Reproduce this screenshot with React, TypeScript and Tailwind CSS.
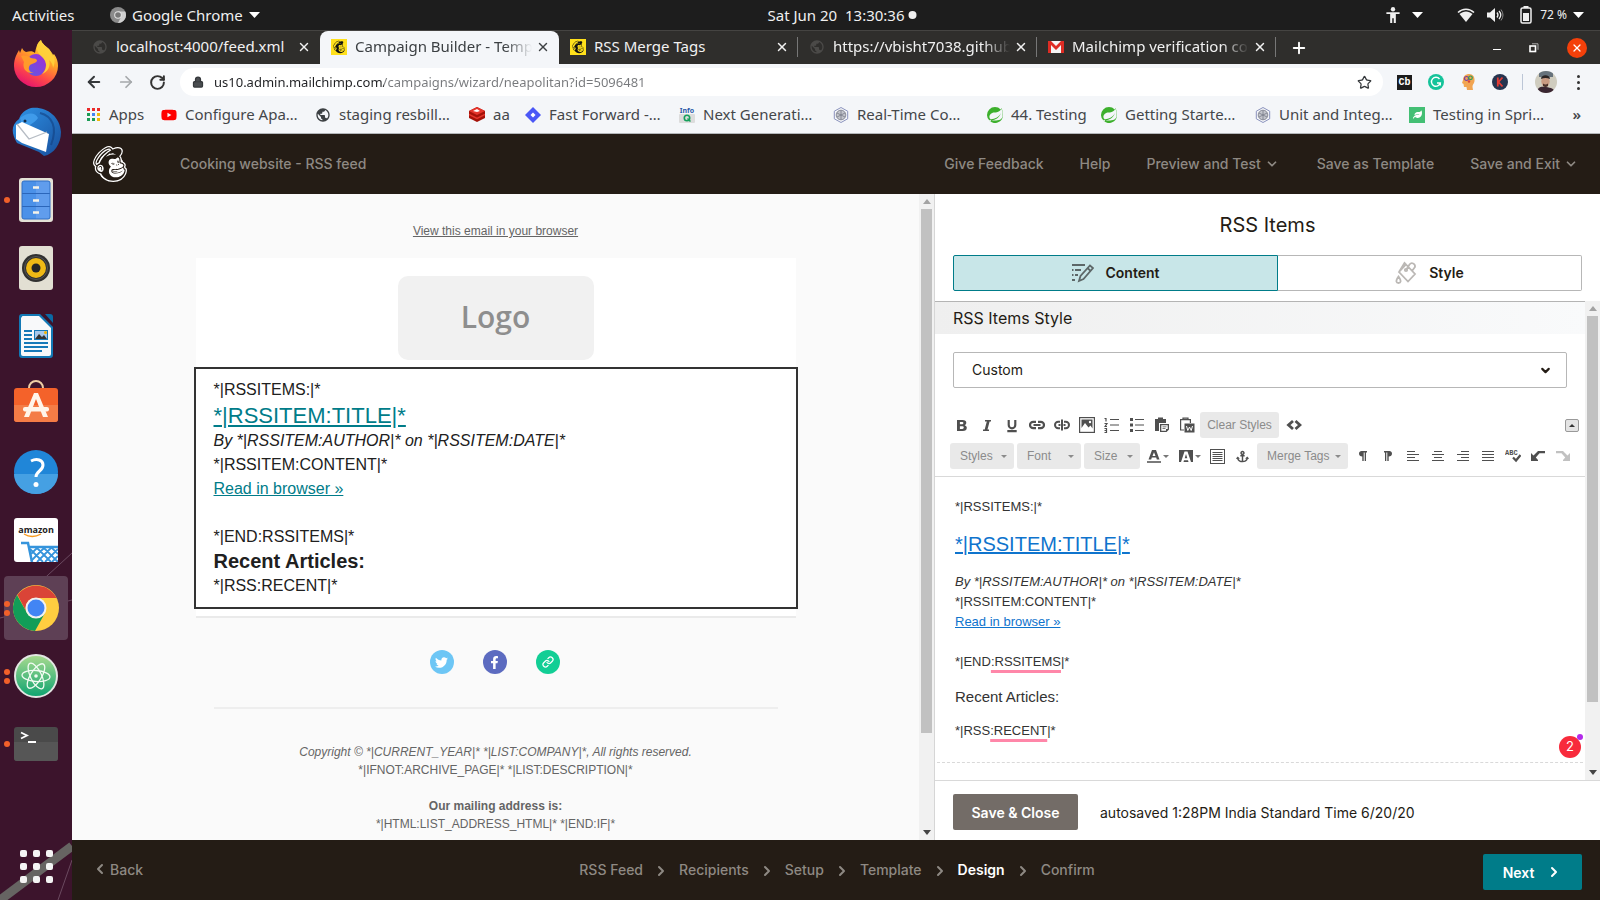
import React from 'react';
import { FaMailchimp, FaTwitter, FaFacebookF, FaYoutube, FaAnchor, FaLeaf } from 'react-icons/fa';
import { SiSpring } from 'react-icons/si';
import { MdPublic } from 'react-icons/md';
import { Link, Lock, Star, RotateCw, ArrowLeft, ArrowRight, Plus, X, ChevronDown, ChevronLeft, ChevronRight } from 'lucide-react';

const UI = "font-['Noto_Sans',sans-serif]";
const GRAPHIK = "font-['Inter',sans-serif]";
const ARIAL = "font-['Liberation_Sans',Arial,sans-serif]";

function Caret({ className = 'h-[6px] w-[11px] text-white' }: { className?: string }) {
  return (
    <svg viewBox="0 0 10 6" preserveAspectRatio="none" className={className} fill="currentColor">
      <path d="M0 0h10L5 6z" />
    </svg>
  );
}

/* ---------- GNOME top bar ---------- */

function TopBar() {
  return (
    <header className={`${UI} relative flex h-[30px] shrink-0 items-center justify-between bg-[#1d1d1d] pr-4 pl-3 text-[15px] text-[#f0f0f0]`}>
      <div className="flex items-center">
        <button className="w-[98px] text-left">Activities</button>
        <button className="flex items-center">
          <svg viewBox="0 0 16 16" className="mr-1.5 h-4 w-4">
            <circle cx="8" cy="8" r="8" fill="#8b8b8b" />
            <path d="M8 4.5h7.2A8 8 0 0 1 8 16l3-6z" fill="#d0d0d0" />
            <circle cx="8" cy="8" r="3.8" fill="#e4e4e4" />
            <circle cx="8" cy="8" r="2.8" fill="#777" />
          </svg>
          Google Chrome
          <Caret className="ml-1.5 h-[6px] w-[11px] text-white" />
        </button>
      </div>
      <button className="absolute left-1/2 flex -translate-x-1/2 items-center pl-[84px] whitespace-pre">
        Sat Jun 20  13:30:36
        <span className="ml-1 h-2 w-2 rounded-full bg-[#f0f0f0]" />
      </button>
      <div className="flex items-center">
        <svg viewBox="0 0 14 18" className="h-[17px] w-[14px]" fill="#f0f0f0">
          <circle cx="7" cy="2.4" r="2.3" />
          <path d="M0 5.5h14v2H10V17H7.8v-5H6.2v5H4V7.500H0z" />
        </svg>
        <Caret className="mr-[34px] ml-3 h-[6px] w-[11px] text-white" />
        <svg viewBox="0 0 18 15" className="mr-3 h-[15px] w-[18px]" fill="none">
          <path d="M1 4.500C5.500 0 12.500 0 17 4.500" stroke="#f0f0f0" strokeWidth="1.500" />
          <path d="M2.500 6C6.500 2.600 11.500 2.600 15.500 6L9 14z" fill="#f0f0f0" />
        </svg>
        <svg viewBox="0 0 17 16" className="mr-4 h-4 w-[17px]" fill="none" stroke="#f0f0f0">
          <path d="M0 5.500h3L8 1v14L3 10.500H0z" fill="#f0f0f0" stroke="none" />
          <path d="M10 5.500q2 2.500 0 5M12 4q3.500 4 0 8" strokeWidth="1.300" />
          <path d="M14 2.500q4 5.500 0 11" stroke="#888" />
        </svg>
        <svg viewBox="0 0 12 18" className="mr-2 h-[18px] w-3">
          <rect x="3.500" y="0" width="5" height="2" fill="#f0f0f0" />
          <rect x="1" y="2" width="10" height="15" rx="1.500" fill="none" stroke="#f0f0f0" strokeWidth="1.500" />
          <rect x="3" y="7" width="6" height="8" fill="#f0f0f0" />
        </svg>
        <span className="text-[12px]">72 %</span>
        <Caret className="ml-1.5 h-[6px] w-[11px] text-white" />
      </div>
    </header>
  );
}

/* ---------- Dock ---------- */

const dockIcons: { name: string; dots: number; active?: boolean; icon: React.ReactNode }[] = [
  {
    name: 'Firefox', dots: 0,
    icon: (
      <svg viewBox="0 0 46 48" className="h-[48px] w-[46px]">
        <defs>
          <linearGradient id="ff" x1="0.800" y1="0" x2="0.300" y2="1">
            <stop offset="0" stopColor="#fff04a" /><stop offset=".4" stopColor="#ffa127" /><stop offset=".7" stopColor="#ff4a48" /><stop offset="1" stopColor="#e4126f" />
          </linearGradient>
          <linearGradient id="fp" x1="0" y1="1" x2="1" y2="0"><stop offset="0" stopColor="#5b5ce0" /><stop offset="1" stopColor="#a32bd6" /></linearGradient>
        </defs>
        <path d="M28 0c1 4 5 6 8 9 2 3 3 5 3 7l2-2c3 4 4 8 4 12a22 21 0 0 1-44 0c0-8 3-12 5-16l1 3 2-5c1 2 2 3 4 4 4-1 7-1 9 1 1-5 2-10 6-13z" fill="url(#ff)" />
        <ellipse cx="23" cy="25" rx="10" ry="11" fill="url(#fp)" />
        <path d="M8 16c5-1 7 0 10 2 3 1 6 0 6 3-2 3-7 2-8 6-1 3 2 6 5 6-8 1-12-5-10-11z" fill="#ff9a2a" />
        <path d="M28 0c-6 5-5 12 1 17 6 5 5 13 0 17 6-2 9-8 7-14 3 2 4 6 4 8 4-9 0-14-4-19-3-3-7-5-8-9z" fill="#ffd13b" opacity=".9" />
      </svg>
    ),
  },
  {
    name: 'Thunderbird', dots: 0,
    icon: (
      <svg viewBox="0 0 50 50" className="h-[50px] w-[50px]">
        <defs><linearGradient id="tb" x1="0" y1="0" x2="1" y2="1"><stop offset="0" stopColor="#2f94e8" /><stop offset="1" stopColor="#184f9c" /></linearGradient></defs>
        <path d="M20 1c15-2 29 8 30 24 0 12-7 22-17 24l-5-4-22-9C0 26 0 18 8 12c2-6 6-9 12-11z" fill="url(#tb)" />
        <path d="M9 11c9-7 16-5 18 0-4 6-9 6-14 12z" fill="#3f9bea" />
        <path d="M5 18l6-3 27 12-3 18-24-9-6-4z" fill="#fff" />
        <path d="M6 17l12 15 18-7" fill="none" stroke="#b6bcc4" strokeWidth="1.300" />
        <path d="M29 6c12 3 18 14 11 32" stroke="#123f80" strokeWidth="2" fill="none" opacity=".6" />
        <circle cx="14" cy="14" r="1.500" fill="#102a4a" />
      </svg>
    ),
  },
  {
    name: 'Files', dots: 1,
    icon: (
      <svg viewBox="0 0 34 44" className="h-[44px] w-[34px]">
        <rect width="34" height="44" rx="3" fill="#e4e1d6" />
        <rect x="3" y="3" width="28" height="38" rx="2" fill="#4b91e8" />
        <path d="M17 3h12a2 2 0 0 1 2 2v34a2 2 0 0 1-2 2H17z" fill="#6ea5f0" opacity=".6" />
        <path d="M3 15.500h28M3 28.500h28" stroke="#2b66ba" />
        <path d="M14 9.500h6M14 22.500h6M14 34.500h6" stroke="#f6f3e9" strokeWidth="2.500" />
        <rect x="3" y="3" width="28" height="38" rx="2" fill="none" stroke="#2f6fc4" />
      </svg>
    ),
  },
  {
    name: 'Rhythmbox', dots: 0,
    icon: (
      <svg viewBox="0 0 34 44" className="h-[44px] w-[34px]">
        <rect width="34" height="44" rx="3" fill="#e2dfd3" />
        <circle cx="17" cy="22" r="14" fill="#303030" />
        <circle cx="17" cy="22" r="11.500" fill="none" stroke="#555" />
        <circle cx="17" cy="22" r="10" fill="#efb915" />
        <circle cx="17" cy="22" r="4.500" fill="#262626" />
      </svg>
    ),
  },
  {
    name: 'Writer', dots: 0,
    icon: (
      <svg viewBox="0 0 34 44" className="h-[44px] w-[34px]">
        <path d="M3 0h18l13 13v28a3 3 0 0 1-3 3H3a3 3 0 0 1-3-3V3a3 3 0 0 1 3-3z" fill="#1379b5" />
        <path d="M3.500 2H20l12 12v26a2 2 0 0 1-2 2H4a2 2 0 0 1-2-2V4z" fill="#f8f9fa" />
        <path d="M26 0h5a3 3 0 0 1 3 3v6z" fill="#0a6aa5" />
        <path d="M5 17h8M5 21h8M5 25h8M5 29h24M5 33h24M5 37h18" stroke="#1679b8" strokeWidth="2" />
        <rect x="15.500" y="16.500" width="13" height="9" fill="#a9c8ea" stroke="#1679b8" />
        <path d="M16 25l4-5 3 3 2-2 3 4z" fill="#333" /><circle cx="26.500" cy="18.500" r="1.500" fill="#f4b400" />
      </svg>
    ),
  },
  {
    name: 'Ubuntu Software', dots: 0,
    icon: (
      <svg viewBox="0 0 44 49" className="h-[49px] w-[44px]">
        <path d="M15 10V8a7 7 0 0 1 14 0v2" fill="none" stroke="#efcfa5" strokeWidth="2" />
        <rect y="8" width="44" height="34" rx="3" fill="#f4622a" />
        <path d="M0 25h44v14a3 3 0 0 1-3 3H3a3 3 0 0 1-3-3z" fill="#f47c46" />
        <path d="M20 13h4l10 24h-5l-7-18-7 18h-5z" fill="#fff5ea" /><rect x="9" y="27" width="26" height="4.500" rx="2" fill="#fff5ea" />
      </svg>
    ),
  },
  {
    name: 'Help', dots: 0,
    icon: (
      <svg viewBox="0 0 44 44" className="h-[44px] w-[44px]">
        <circle cx="22" cy="22" r="22" fill="#2086d8" />
        <path d="M0 24h44a22 20 0 0 1-44 0z" fill="#45a0e3" />
        <path d="M17 11c6-3 12-1 12 4 0 6-7 6-7 12" fill="none" stroke="#fff" strokeWidth="3" />
        <circle cx="22" cy="34.500" r="2.500" fill="#fff" />
      </svg>
    ),
  },
  {
    name: 'Amazon', dots: 0,
    icon: (
      <svg viewBox="0 0 44 44" className="h-[44px] w-[44px]">
        <rect width="44" height="44" rx="3" fill="#fff" />
        <text x="22" y="15" textAnchor="middle" fontFamily="Open Sans, sans-serif" fontWeight="700" fontSize="9" fill="#222">amazon</text>
        <path d="M10 16q8 5 17 0" fill="none" stroke="#f79a1f" strokeWidth="1.400" />
        <path d="M7 25h7l4 19M15 29h29" fill="none" stroke="#3594dc" strokeWidth="2.500" />
        <path d="M16 31l13 13M22 29l15 15M29 29l15 15M37 29l7 7M44 31L31 44M37 30L23 44M30 30L17 43M23 30l-6 6M44 38l-6 6" stroke="#3594dc" strokeWidth="1.800" />
      </svg>
    ),
  },
  {
    name: 'Chrome', dots: 2, active: true,
    icon: (
      <svg viewBox="0 0 46 46" className="h-[46px] w-[46px]">
        <circle cx="23" cy="23" r="23" fill="#ffcd40" />
        <path d="M4.500 10A23 23 0 0 1 43.500 13H23a10 10 0 0 0-9 15z" fill="#da4437" />
        <path d="M4 10A23 23 0 0 0 22 46l10-18a10.500 10.500 0 0 1-18 0z" fill="#119d58" />
        <circle cx="23" cy="23" r="10.500" fill="#f1f1f1" /><circle cx="23" cy="23" r="8.500" fill="#4285f4" />
      </svg>
    ),
  },
  {
    name: 'Atom', dots: 2,
    icon: (
      <svg viewBox="0 0 44 44" className="h-[44px] w-[44px]" fill="none">
        <defs><linearGradient id="at" x1="0" y1="0" x2="0" y2="1"><stop offset="0" stopColor="#a9db8f" /><stop offset="1" stopColor="#0da370" /></linearGradient></defs>
        <circle cx="22" cy="22" r="21" fill="url(#at)" stroke="#e3e6e3" strokeWidth="2" />
        <g stroke="#f1fbf2" strokeWidth="1.300">
          <ellipse cx="22" cy="22" rx="14" ry="5.500" transform="rotate(4 22 22)" />
          <ellipse cx="22" cy="22" rx="14" ry="5.500" transform="rotate(64 22 22)" />
          <ellipse cx="22" cy="22" rx="14" ry="5.500" transform="rotate(122 22 22)" />
        </g>
        <circle cx="22" cy="22" r="1.800" fill="#f1fbf2" />
      </svg>
    ),
  },
  {
    name: 'Terminal', dots: 1,
    icon: (
      <svg viewBox="0 0 44 34" className="h-[34px] w-[44px]">
        <rect width="44" height="34" rx="3" fill="#4a4a4a" /><path d="M0 15h44v16a3 3 0 0 1-3 3H3a3 3 0 0 1-3-3z" fill="#565656" />
        <path d="M7 5.500l6 3-6 3M14 15h8" fill="none" stroke="#fff" strokeWidth="1.800" />
      </svg>
    ),
  },
];

function Dock() {
  return (
    <nav className="relative flex w-[72px] shrink-0 flex-col items-center justify-between overflow-hidden bg-[#3c142c] pt-0.5 pb-[17px]">
      <svg viewBox="0 0 72 360" className="absolute bottom-0 left-0 h-[360px] w-[72px]" fill="none">
        <path d="M0 360L72 306" stroke="#666462" strokeWidth="9" />
        <path d="M0 78L72 60M36 46L72 13M58 360L72 320" stroke="#6b4a60" strokeWidth="1" />
      </svg>
      <div className="relative flex flex-col gap-1">
        {dockIcons.map((d) => (
          <button key={d.name} aria-label={d.name} className={`relative flex h-16 w-16 items-center justify-center rounded ${d.active ? 'bg-[#5e4055]' : ''}`}>
            <span className="absolute left-0 flex flex-col gap-[3px]">
              {Array.from({ length: d.dots }, (_, i) => (
                <span key={i} className="h-1.5 w-1.5 rounded-full bg-[#f2602a]" />
              ))}
            </span>
            {d.icon}
          </button>
        ))}
      </div>
      <button aria-label="Show applications" className="relative grid grid-cols-3 gap-[6px]">
        {Array.from({ length: 9 }, (_, i) => (
          <span key={i} className="h-[7px] w-[7px] rounded-[2px] bg-[#f4f4f4]" />
        ))}
      </button>
    </nav>
  );
}

/* ---------- Browser chrome ---------- */

const MonkeyFav = () => (
  <span className="flex h-4 w-4 shrink-0 items-center justify-center bg-[#ffe01b]"><FaMailchimp size={14} color="#111" /></span>
);
const GmailFav = () => (
  <svg viewBox="0 0 16 12" className="h-3 w-4 shrink-0"><rect width="16" height="12" rx="1" fill="#f4f4f4" /><path d="M0 0h3l5 5 5-5h3v12h-3V4L8 9 3 4v8H0z" fill="#dd2c24" /></svg>
);

const tabs = [
  { title: 'localhost:4000/feed.xml', icon: <MdPublic size={16} color="#4b4a48" className="shrink-0" />, sep: false },
  { title: 'Campaign Builder - Templ', icon: <MonkeyFav />, active: true, sep: false },
  { title: 'RSS Merge Tags', icon: <MonkeyFav />, sep: true },
  { title: 'https://vbisht7038.github', icon: <MdPublic size={16} color="#4b4a48" className="shrink-0" />, sep: true },
  { title: 'Mailchimp verification cod', icon: <GmailFav />, sep: true },
];

function TabStrip() {
  return (
    <div className="flex h-[34px] shrink-0 items-stretch border-t border-[#454442] bg-[#2f2e2c] pl-[9px]">
      {tabs.map((t) => (
        <div
          key={t.title}
          className={`relative flex w-[239px] items-center pb-0.5 pl-[11px] ${t.active ? 'rounded-t-lg bg-[#f4f6f9] text-[#3c4043]' : 'text-[#f1f1f1]'}`}
        >
          {t.icon}
          <button className={`ml-2 w-[177px] overflow-hidden text-left whitespace-nowrap ${t.title.length < 24 ? '' : '[mask-image:linear-gradient(to_right,#000_150px,transparent)]'}`}>{t.title}</button>
          <button aria-label={`Close ${t.title}`} className="ml-1"><X size={14} strokeWidth={2.500} /></button>
          {t.sep && <span className="absolute right-0 h-5 w-px bg-[#777]" />}
        </div>
      ))}
      <button aria-label="New tab" className="ml-3.5 text-white"><Plus size={18} strokeWidth={2.500} /></button>
      <div className="ml-auto flex items-center gap-7 pr-[13px] text-white">
        <button aria-label="Minimize" className="mt-1 h-px w-2 bg-white" />
        <button aria-label="Restore">
          <svg viewBox="0 0 10 10" className="h-[10px] w-[10px]" fill="none" stroke="#fff"><rect x="1" y="3" width="5.500" height="5.500" strokeWidth="1.600" /><path d="M3 .8h6v6" stroke="#aaa" /></svg>
        </button>
        <button aria-label="Close window" className="flex h-5 w-5 items-center justify-center rounded-full bg-[#f4400a]"><X size={12} strokeWidth={2.500} /></button>
      </div>
    </div>
  );
}

function AddressBar() {
  return (
    <div className="flex h-9 shrink-0 items-center bg-[#f4f6f9] pr-5 pl-[13px] text-[#35383b]">
      <button aria-label="Back"><ArrowLeft size={18} strokeWidth={2.600} /></button>
      <button aria-label="Forward" className="ml-3.5 text-[#a5a8ab]"><ArrowRight size={18} strokeWidth={2.300} /></button>
      <button aria-label="Reload" className="ml-3.5 text-[#333]"><RotateCw size={17} strokeWidth={2.800} /></button>
      <div className="ml-3.5 flex h-7 flex-1 items-center rounded-full bg-white pr-[11px] pl-3">
        <Lock size={12} fill="#4a4d50" strokeWidth={2.500} />
        <input
          aria-label="Address"
          className="ml-2.5 h-full flex-1 bg-[linear-gradient(to_right,#202124_170px,#77797c_170px)] bg-clip-text text-[13px] text-transparent outline-none"
          defaultValue="us10.admin.mailchimp.com/campaigns/wizard/neapolitan?id=5096481"
        />
        <button aria-label="Bookmark"><Star size={15} strokeWidth={2} /></button>
      </div>
      <div className="ml-3.5 flex items-center gap-4">
        <span className="flex h-[15px] w-[15px] items-center justify-center bg-[#1c1c1c] font-['Liberation_Mono',monospace] text-[10px] font-bold text-white">Cb</span>
        <svg viewBox="0 0 16 16" className="h-4 w-4"><circle cx="8" cy="8" r="8" fill="#15c39a" /><path d="M11.500 5A4.500 4.500 0 1 0 12.300 9H9M12.300 9v2.500" fill="none" stroke="#fff" strokeWidth="1.400" /></svg>
        <svg viewBox="0 0 14 16" className="h-4 w-4"><path d="M2 6c0-4 3-6 6-6 4 0 6 3 5.500 7-.4 3-2 3-2 6l.5 3H6l-.5-3H3l-.5-3L1 9z" fill="#f1a552" /><circle cx="5.500" cy="4.500" r="2" fill="none" stroke="#7b3fa0" strokeWidth="1.200" /><circle cx="9.500" cy="3.800" r="1.800" fill="none" stroke="#2e9e57" strokeWidth="1.200" /><circle cx="8" cy="7.500" r="1.200" fill="#d8433b" /></svg>
        <svg viewBox="0 0 16 16" className="h-4 w-4"><circle cx="8" cy="8" r="8" fill="#26344f" /><path d="M5.800 3.500v9M10.500 3.500l-4 4.500 4 4.500" fill="none" stroke="#e23b34" strokeWidth="1.800" /></svg>
      </div>
      <span className="mr-3 ml-[14px] h-4 w-px bg-[#bcc6d6]" />
      <svg viewBox="0 0 22 22" className="h-[22px] w-[22px]">
        <defs><clipPath id="av"><circle cx="11" cy="11" r="11" /></clipPath></defs>
        <g clipPath="url(#av)"><rect width="22" height="22" fill="#cfccbf" /><path d="M4 0h14v6H4z" fill="#66727c" /><path d="M2 22c0-6 4-7 9-6s8 1 9 6z" fill="#3a2632" /><ellipse cx="10.500" cy="10.500" rx="4.200" ry="5.200" fill="#c89a82" /><path d="M6 8C6 3 15 3 15 8c-3-1.500-6-1.500-9 0z" fill="#2a2424" /><path d="M8 12.500q2.500 2 5 0v2.500q-2.500 2-5 0z" fill="#4a302a" /></g>
      </svg>
      <button aria-label="Menu" className="ml-5 flex flex-col gap-[3px]">
        <span className="h-[3px] w-[3px] rounded-full bg-[#333]" /><span className="h-[3px] w-[3px] rounded-full bg-[#333]" /><span className="h-[3px] w-[3px] rounded-full bg-[#333]" />
      </button>
    </div>
  );
}

const Hex = () => (
  <svg viewBox="0 0 16 16" className="h-4 w-4 shrink-0" fill="none" stroke="#8b93bd"><path d="M8 .5l6.700 3.700v7.600L8 15.500 1.300 11.800V4.200z" /><circle cx="8" cy="8" r="4.800" fill="#c3c5cc" stroke="#8a8d99" /><path d="M8 3.500v9M4 6l8 4M12 6l-8 4" stroke="#777b88" strokeWidth=".8" /></svg>
);
const SpringFav = () => <SiSpring size={16} color="#3db02d" className="shrink-0" />;

const bookmarks: { label: string; icon: React.ReactNode; width: string }[] = [
  { label: 'Configure Apa…', width: 'w-[112px]', icon: <FaYoutube size={16} color="#f00" className="shrink-0" /> },
  { label: 'staging resbill…', width: 'w-[112px]', icon: <MdPublic size={16} color="#3c4043" className="shrink-0" /> },
  { label: 'aa', width: 'w-[14px]', icon: <svg viewBox="0 0 16 15" className="h-[15px] w-4 shrink-0"><path d="M0 4l8-4 8 4v7l-8 4-8-4z" fill="#a41209" /><path d="M0 4l8-4 8 4-8 4z" fill="#e5352b" /><path d="M0 7.500l8 4 8-4" stroke="#e5352b" strokeWidth="1.500" fill="none" /><path d="M4 4l4-2 3 2-3 1z" fill="#fff" /></svg> },
  { label: 'Fast Forward -…', width: 'w-[112px]', icon: <svg viewBox="0 0 16 16" className="h-4 w-4 shrink-0"><path d="M8 0l8 8-8 8-8-8z" fill="#4a57f6" /><path d="M8 5.500L10.500 8 8 10.500 5.500 8z" fill="#fff" /></svg> },
  { label: 'Next Generati…', width: 'w-[112px]', icon: <svg viewBox="0 0 16 16" className="h-4 w-4 shrink-0"><rect y="7" width="16" height="9" rx="1" fill="#dcdcdc" /><text x="8" y="6" textAnchor="middle" fontSize="7" fontWeight="700" fill="#2b5aa8">Info</text><circle cx="8" cy="11" r="2.700" fill="none" stroke="#16a05c" strokeWidth="1.600" /><path d="M8.500 11.500l3 3" stroke="#16a05c" strokeWidth="1.500" /></svg> },
  { label: 'Real-Time Co…', width: 'w-[112px]', icon: <Hex /> },
  { label: '44. Testing', width: 'w-[72px]', icon: <SpringFav /> },
  { label: 'Getting Starte…', width: 'w-[112px]', icon: <SpringFav /> },
  { label: 'Unit and Integ…', width: 'w-[112px]', icon: <Hex /> },
  { label: 'Testing in Spri…', width: 'w-[112px]', icon: <span className="flex h-4 w-4 shrink-0 items-center justify-center bg-[#43bf74]"><FaLeaf size={9} color="#fff" /></span> },
];

const appColors = ['bg-[#ea2a2a]', 'bg-[#ea2a2a]', 'bg-[#ea2a2a]', 'bg-[#1c9c56]', 'bg-[#4484f3]', 'bg-[#f0b70b]', 'bg-[#1c9c56]', 'bg-[#1c9c56]', 'bg-[#f0b70b]'];

function Bookmarks() {
  return (
    <div className="flex h-[34px] shrink-0 items-center border-b border-[#b3b6b9] bg-[#f4f6f9] pr-[19px] pb-1 pl-[15px] text-[#44474a]">
      <a href="#apps" className="mr-[17px] flex items-center gap-[9px]">
        <span className="grid grid-cols-3 gap-[2px]">
          {appColors.map((c, i) => <span key={i} className={`h-[3px] w-[3px] ${c}`} />)}
        </span>
        <span className="w-[35px]">Apps</span>
      </a>
      <div className="flex gap-[18px]">
        {bookmarks.map((b) => (
          <a key={b.label} href="#bookmark" className="flex items-center gap-2 whitespace-nowrap">
            {b.icon}
            <span className={b.width}>{b.label}</span>
          </a>
        ))}
      </div>
      <button aria-label="More bookmarks" className="ml-auto font-semibold">»</button>
    </div>
  );
}

/* ---------- Mailchimp ---------- */

function Freddie() {
  return (
    <span className="grid h-[40px] w-[36px] place-items-center" aria-hidden="true">
      <svg viewBox="0 0 36 40" className="col-start-1 row-start-1 h-[40px] w-[36px]"><ellipse cx="24" cy="24" rx="9" ry="11" fill="#fff" /><ellipse cx="16" cy="23" rx="10" ry="13" fill="#fff" /></svg>
      <FaMailchimp size={38} color="#fff" stroke="#fff" strokeWidth={34} className="col-start-1 row-start-1 overflow-visible" />
      <FaMailchimp size={38} color="#241c15" stroke="none" strokeWidth={0} className="col-start-1 row-start-1" />
    </span>
  );
}

function AppHeader() {
  return (
    <header className={`${GRAPHIK} flex h-[60px] shrink-0 items-center bg-[#241c15] pr-[22px] pb-px pl-[19px] text-[14px] font-medium text-[#8e8983]`}>
      <Freddie />
      <h1 className="ml-[53px]">Cooking website - RSS feed</h1>
      <nav className="ml-auto flex items-center gap-9">
        <a href="#feedback">Give Feedback</a>
        <a href="#help">Help</a>
        <button className="mr-0.5 flex items-center gap-1">Preview and Test<ChevronDown size={14} strokeWidth={3} /></button>
        <button>Save as Template</button>
        <button className="flex items-center gap-1">Save and Exit<ChevronDown size={14} strokeWidth={3} /></button>
      </nav>
    </header>
  );
}

function ScrollTrack({ thumb }: { thumb: string }) {
  return (
    <div className="flex w-[15px] shrink-0 flex-col items-center bg-[#f1f1f1]" aria-hidden="true">
      <span className="flex h-[15px] shrink-0 items-center"><Caret className="h-[5px] w-[8px] rotate-180 text-[#a3a3a3]" /></span>
      <span className="flex min-h-0 w-full flex-1 flex-col items-center"><span className={`w-[11px] bg-[#c1c1c1] ${thumb}`} /></span>
      <span className="flex h-[15px] shrink-0 items-center"><Caret className="h-[5px] w-[8px] text-[#444]" /></span>
    </div>
  );
}

function Preview() {
  return (
    <section className={`${ARIAL} flex min-w-0 flex-1 bg-[#fafafa]`}>
      <div className="min-w-0 flex-1 overflow-hidden">
        <div className="mx-auto w-[600px] pt-7">
          <p className="text-center text-[12px] leading-[18px] text-[#656565]"><a href="#browser" className="underline">View this email in your browser</a></p>
          <div className="mt-[18px] border-b-2 border-[#eaeaea] bg-white pt-[18px] pb-[7px]">
            <div className="mx-auto flex h-[84px] w-[196px] items-center justify-center rounded-[10px] bg-[#f1f1f1] pb-[3px] font-['Open_Sans',sans-serif] text-[30px] font-semibold text-[#8e8e8e]">Logo</div>
            <div className="-mx-0.5 mt-[7px] border-2 border-[#333] px-[18px] py-[9px] text-[16px] leading-6 text-[#202020]">
              <p>*|RSSITEMS:|*</p>
              <h2 className="text-[22px] leading-[27px]"><a href="#title" className="text-[#007c89] underline">*|RSSITEM:TITLE|*</a></h2>
              <p className="italic">By *|RSSITEM:AUTHOR|* on *|RSSITEM:DATE|*</p>
              <p>*|RSSITEM:CONTENT|*</p>
              <p><a href="#read" className="text-[#007c89] underline">Read in browser »</a></p>
              <p className="mt-6">*|END:RSSITEMS|*</p>
              <h3 className="text-[20px] leading-[25px] font-bold">Recent Articles:</h3>
              <p>*|RSS:RECENT|*</p>
            </div>
          </div>
          <div className="mt-8 flex justify-center gap-[29px] pr-0.5 text-white">
            <a href="#twitter" aria-label="Twitter" className="flex h-6 w-6 items-center justify-center rounded-full bg-[#6dc6f5]"><FaTwitter size={13} /></a>
            <a href="#facebook" aria-label="Facebook" className="flex h-6 w-6 items-center justify-center rounded-full bg-[#5c6bc0]"><FaFacebookF size={13} /></a>
            <a href="#website" aria-label="Website" className="flex h-6 w-6 items-center justify-center rounded-full bg-[#12ce95]"><Link size={12} strokeWidth={2.500} /></a>
          </div>
          <hr className="mx-[18px] mt-[33px] border-t-2 border-[#eee]" />
          <div className="mt-[34px] text-center text-[12px] leading-[18px] text-[#656565]">
            <p className="italic">Copyright © *|CURRENT_YEAR|* *|LIST:COMPANY|*, All rights reserved.</p>
            <p>*|IFNOT:ARCHIVE_PAGE|* *|LIST:DESCRIPTION|*</p>
            <p className="mt-[18px] font-bold">Our mailing address is:</p>
            <p>*|HTML:LIST_ADDRESS_HTML|* *|END:IF|*</p>
          </div>
        </div>
      </div>
      <ScrollTrack thumb="h-[85%]" />
    </section>
  );
}

function Tool({ label, wide, children }: { label: string; wide?: boolean; children: React.ReactNode }) {
  return (
    <button aria-label={label} title={label} className={`flex h-[26px] shrink-0 items-center justify-center text-[#4f4f4f] ${wide ? 'w-8 gap-0.5' : 'w-[25px] pr-0.5'}`}>
      {children}
    </button>
  );
}

function Drop({ label, width }: { label: string; width: string }) {
  return (
    <span className={`relative flex h-[26px] shrink-0 items-center ${width}`}>
      <select aria-label={label} className="h-full w-full appearance-none rounded-[3px] bg-[#e9e9e9] pl-2.5 text-[12px] text-[#8b8b8b]">
        <option>{label}</option>
      </select>
      <Caret className="pointer-events-none absolute right-[7px] h-[3px] w-[6px] text-[#8b8b8b]" />
    </span>
  );
}

function Glyph({ d, fill = 'none', w = 1.200, className = 'h-4 w-4' }: { d: string; fill?: string; w?: number; className?: string }) {
  return (
    <svg viewBox="0 0 16 16" className={className} fill={fill} stroke={fill === 'none' ? 'currentColor' : 'none'} strokeWidth={w}><path d={d} /></svg>
  );
}

function Toolbar() {
  return (
    <div className={`${ARIAL} mt-6 flex flex-col gap-[5px] border-b border-[#d9d9d9] pb-[7px] pl-[15px]`}>
      <div className="flex items-center">
        <Tool label="Bold"><svg viewBox="0 0 10 11" className="h-[11px] w-[10px]" fill="currentColor"><path fillRule="evenodd" d="M0 0h5.500C8 0 9.300 1 9.300 2.800c0 1.200-.6 2-1.600 2.400C9 5.600 9.800 6.500 9.800 7.800 9.800 9.900 8.300 11 5.800 11H0zM2.900 2v2.300h2.200q1.300 0 1.300-1.200T5.100 2zM2.900 6.200V9h2.400q1.500 0 1.500-1.400T5.300 6.200z" /></svg></Tool>
        <Tool label="Italic"><svg viewBox="0 0 10 11" className="h-[11px] w-[10px]" fill="currentColor"><path d="M3 0h6v1.500H7.600L5.500 9.500H7V11H1V9.500h1.700l2.100-8H3z" /></svg></Tool>
        <Tool label="Underline"><Glyph w={2.300} d="M4.500 2v5.500a3.500 3.500 0 0 0 7 0V2M3 14h10" className="h-[15px] w-4" /></Tool>
        <Tool label="Link"><Glyph w={2.200} d="M7 4.800H4.200a3.200 3.200 0 0 0 0 6.400H7M9 4.800h2.800a3.200 3.200 0 0 1 0 6.400H9M4.500 8h7" /></Tool>
        <Tool label="Unlink"><Glyph w={2} d="M6 4.800H4.200a3.200 3.200 0 0 0 0 6.400H6M10 4.800h1.800a3.200 3.200 0 0 1 0 6.400H10M8 2.500v11M4.500 8h2M9.500 8h2" /></Tool>
        <Tool label="Image"><svg viewBox="0 0 16 16" className="h-4 w-4"><rect x=".6" y=".6" width="14.800" height="14.800" fill="none" stroke="currentColor" strokeWidth="1.200" /><path d="M2.500 2.500h11v9l-2-3-2 2L6 6l-3.500 5z" fill="currentColor" /><circle cx="11" cy="5" r="1.200" fill="#fff" /></svg></Tool>
        <Tool label="Numbered list"><Glyph d="M6 2.500h9M6 8h9M6 13.500h9M.5 1.500h1.500v3M.5 6.500H3L1 9.500h2M.5 11.500h2v2h-2M2.500 13.500v2h-2" /></Tool>
        <Tool label="Bulleted list"><svg viewBox="0 0 16 16" className="h-4 w-4" stroke="currentColor"><path d="M6 2.500h9M6 8h9M6 13.500h9" strokeWidth="1.200" /><path d="M1 2.500h3M1 8h3M1 13.500h3" strokeWidth="3" /></svg></Tool>
        <Tool label="Paste"><svg viewBox="0 0 16 16" className="h-4 w-4" fill="currentColor"><path d="M1 2h3V.5h5V2h3v4H5v8H1z" /><path d="M6 7h9v5.500L12.500 15H6zM7.300 8.300v5.400H12V12h1.700V8.300z" fillRule="evenodd" /><path d="M8.500 9.500h4v.8h-4zM8.500 11.300h3v.8h-3z" /></svg></Tool>
        <Tool label="Paste from Word"><svg viewBox="0 0 16 16" className="h-4 w-4"><path d="M5 13H1.600V2.600h9.800V6M4 3V1.200h5V3" fill="none" stroke="currentColor" strokeWidth="1.200" /><rect x="5.500" y="6.500" width="10" height="9" fill="currentColor" /><path d="M7.500 9l1.300 4.500L10.500 10l1.700 3.500L13.500 9" fill="none" stroke="#fff" /></svg></Tool>
        <button className="h-[26px] w-[79px] rounded-[3px] bg-[#e9e9e9] text-[12px] text-[#8b8b8b]">Clear Styles</button>
        <span className="ml-[3px]"><Tool label="Source"><Glyph w={2.800} d="M7 4L2.500 8 7 12M9.500 4L14 8l-4.500 4" /></Tool></span>
        <button aria-label="Collapse toolbar" className="mr-1.5 ml-auto flex h-[13px] w-[14px] items-center justify-center rounded-[2px] border border-[#999] bg-[#e4e4e4]"><Caret className="h-[3px] w-[6px] rotate-180 text-[#333]" /></button>
      </div>
      <div className="flex items-center">
        <div className="flex gap-[3px]">
          <Drop label="Styles" width="w-16" />
          <Drop label="Font" width="w-16" />
          <Drop label="Size" width="w-14" />
        </div>
        <div className="ml-0.5 flex">
          <Tool label="Text color" wide>
            <svg viewBox="0 0 14 16" className="h-4 w-[14px]" fill="currentColor"><path fillRule="evenodd" d="M5 2h4l3.500 9.500H9.800L9.200 9.600H4.800l-.6 1.900H1.500zM7 4.200L5.500 8h3zM0 13.300h14v1.500H0z" /></svg><Caret className="h-[3px] w-[6px] text-[#777]" />
          </Tool>
          <Tool label="Background color" wide>
            <svg viewBox="0 0 14 12" className="h-3 w-[14px]"><rect width="14" height="12" fill="currentColor" /><path fillRule="evenodd" d="M5.500 1.500h3L12 12H9.500L9 10.200H5L4.500 12H2zM7 4L5.700 8.300h2.600z" fill="#fff" /></svg><Caret className="h-[3px] w-[6px] text-[#777]" />
          </Tool>
          <Tool label="Block"><svg viewBox="0 0 15 15" className="h-[15px] w-[15px]" fill="none" stroke="currentColor"><rect x=".5" y=".5" width="14" height="14" /><path d="M2.500 3.500h10M2.500 5.500h10M2.500 7.500h10M2.500 9.500h10M2.500 11.500h10" strokeWidth="1.200" /></svg></Tool>
          <Tool label="Anchor"><FaAnchor size={13} /></Tool>
        </div>
        <span className="ml-px"><Drop label="Merge Tags" width="w-[91px]" /></span>
        <div className="ml-[3px] flex">
          <Tool label="Left to right"><Glyph fill="currentColor" d="M6.500 3H12v1.500h-1V13H9.700V4.500h-1V13H7.300V8.500C5.200 8.500 4 7.300 4 5.700 4 4 5.200 3 6.500 3z" /></Tool>
          <Tool label="Right to left"><Glyph fill="currentColor" d="M9.500 3H4v1.500h1V13h1.300V4.500h1V13h1.400V8.500c2.100 0 3.300-1.200 3.300-2.800C12 4 10.800 3 9.500 3z" /></Tool>
          <Tool label="Align left"><Glyph w={1} d="M2 3.500h8M2 6.500h12M2 9.500h8M2 12.500h12" /></Tool>
          <Tool label="Align center"><Glyph w={1} d="M4 3.500h8M2 6.500h12M4 9.500h8M2 12.500h12" /></Tool>
          <Tool label="Align right"><Glyph w={1} d="M6 3.500h8M2 6.500h12M6 9.500h8M2 12.500h12" /></Tool>
          <Tool label="Justify"><Glyph w={1} d="M2 3.500h12M2 6.500h12M2 9.500h12M2 12.500h12" /></Tool>
          <Tool label="Spell check"><svg viewBox="0 0 16 14" className="h-[14px] w-4"><text x="0" y="6" fontFamily="Liberation Mono, monospace" fontSize="7" fontWeight="700" fill="currentColor">ABC</text><path d="M8 8.500l3 3 4.500-5.500" fill="none" stroke="currentColor" strokeWidth="2.200" /></svg></Tool>
          <Tool label="Undo"><svg viewBox="0 0 16 16" className="h-4 w-4" fill="currentColor"><path d="M1 5l2.500 2.500L8 3h7v2.200H9.500L5.800 9.500 8 12v1H1z" /></svg></Tool>
          <span className="opacity-35"><Tool label="Redo"><svg viewBox="0 0 16 16" className="h-4 w-4" fill="currentColor"><path d="M15 5l-2.500 2.500L8 3H1v2.200h5.500l3.700 4.300L8 12v1h7z" /></svg></Tool></span>
        </div>
      </div>
    </div>
  );
}

function Misspelled({ children }: { children: React.ReactNode }) {
  return <span className="underline decoration-[#ff87a9] decoration-[3px] underline-offset-[4px] [text-decoration-skip-ink:none]">{children}</span>;
}

function EditorPanel() {
  return (
    <section className={`${GRAPHIK} flex w-[666px] shrink-0 flex-col border-l border-[#d6d6d6] bg-white text-[#241c15]`}>
      <div className="px-[18px] pt-[17px] pb-[10px]">
        <h2 className="mb-4 text-center text-[20px] leading-7">RSS Items</h2>
        <div className="flex h-9 text-[14px] font-semibold" role="tablist">
          <button role="tab" aria-selected="true" className="flex w-[325px] items-center justify-center gap-3 rounded-l-[2px] border border-[#007c89] bg-[#c8e6e8] pb-0.5">
            <svg viewBox="0 0 22 22" className="h-[22px] w-[22px] text-[#5d6768]" fill="none" stroke="currentColor" strokeWidth="2"><path d="M0 4h13M0 9h1.500M3 9h6M0 14h1.500M3 14h3M0 19h3" /><path d="M7 20l1.500-5L18 4.500l3 2.500-9.500 11zM15.500 7l3 2.800" strokeWidth="1.800" /></svg>
            Content
          </button>
          <button role="tab" aria-selected="false" className="flex flex-1 items-center justify-center gap-3 rounded-r-[2px] border border-l-0 border-[#b7b7b7] pb-0.5">
            <svg viewBox="0 0 22 23" className="h-[23px] w-[22px] text-[#bbb8b5]" fill="none" stroke="currentColor" strokeWidth="1.800"><path d="M4 11L11 3.500 20 13l-7 7.500zM11 3.500L9.500 2 4 11M11 9l3.500-5.500c2-2.500 6-1 5.500 2.500l-3 4" /><circle cx="11" cy="9" r="1.200" /><path d="M3.500 15.500c3.500 5 2 6.500 0 6.500s-3.500-1.500 0-6.500z" /></svg>
            Style
          </button>
        </div>
      </div>
      <div className="flex min-h-0 flex-1">
        <div className="relative min-w-0 flex-1 overflow-hidden">
          <h3 className="flex h-[33px] items-center border-t border-[#b4b4b4] bg-linear-to-r from-[#efefef] to-[#f9fafb] px-[18px] text-[16px]">RSS Items Style</h3>
          <div className="relative mx-[18px] mt-[18px] flex h-9 items-center">
            <select aria-label="RSS Items Style" className="h-full w-full appearance-none rounded-[2px] border border-[#b7b7b7] bg-white pb-0.5 pl-[18px] text-[14px]">
              <option>Custom</option>
            </select>
            <ChevronDown size={13} strokeWidth={4} className="pointer-events-none absolute right-[15px]" />
          </div>
          <Toolbar />
          <div contentEditable suppressContentEditableWarning spellCheck={false} aria-label="Email content" className={`${ARIAL} mx-0.5 border-b border-dashed border-[#d9d9d9] px-[18px] pt-5 pb-[21px] text-[13px] leading-5 text-[#333] outline-none`}>
            <p>*|RSSITEMS:|*</p>
            <h4 className="mt-[15px] mb-4 text-[20px] leading-6"><a href="#title" className="text-[#0f74cd] underline">*|RSSITEM:TITLE|*</a></h4>
            <p className="italic">By *|RSSITEM:AUTHOR|* on *|RSSITEM:DATE|*</p>
            <p>*|RSSITEM:CONTENT|*</p>
            <p><a href="#read" className="text-[#0f74cd] underline">Read in browser »</a></p>
            <p className="mt-5">*|END<Misspelled>:RSSITEMS</Misspelled>|*</p>
            <h5 className="mt-[15px] text-[15px] leading-5">Recent Articles:</h5>
            <p className="mt-[14px]">*|RSS<Misspelled>:RECENT</Misspelled>|*</p>
          </div>
          <button aria-label="2 writing suggestions" className="absolute right-1 bottom-[22px] flex h-[22px] w-[22px] items-center justify-center rounded-full bg-[#f82b3c] text-[13px] text-white">
            2<span className="absolute -top-0.5 -right-0.5 h-1.5 w-1.5 rounded-full bg-[#b32bea]" />
          </button>
        </div>
        <ScrollTrack thumb="h-[86%]" />
      </div>
      <div className="flex h-[60px] shrink-0 items-center gap-[22px] border-t border-[#d9d9d9] px-[18px] pt-[3px]">
        <button className="h-9 w-[125px] rounded-[2px] bg-[#736c67] text-[14px] font-semibold text-white">Save &amp; Close</button>
        <p className="text-[14px]">autosaved 1:28PM India Standard Time 6/20/20</p>
      </div>
    </section>
  );
}

const steps = ['RSS Feed', 'Recipients', 'Setup', 'Template', 'Design', 'Confirm'];

function FooterBar() {
  return (
    <footer className={`${GRAPHIK} grid h-[60px] shrink-0 grid-cols-[1fr_auto_1fr] items-center bg-[#241c15] pr-[18px] pl-5 text-[14px] font-medium text-[#8e8983]`}>
      <button className="flex items-center gap-1 justify-self-start pb-0.5"><ChevronLeft size={16} strokeWidth={3} className="-mr-0.5" />Back</button>
      <ol className="flex items-center gap-[10px] pb-0.5">
        {steps.map((s, i) => (
          <li key={s} className="flex items-center gap-[10px]">
            {i > 0 && <ChevronRight size={16} strokeWidth={3} className="mt-1" />}
            <a href={`#step-${i}`} className={s === 'Design' ? 'font-semibold text-white' : ''}>{s}</a>
          </li>
        ))}
      </ol>
      <button className="mt-1 flex h-9 w-[99px] items-center justify-center gap-3 justify-self-end rounded-[2px] bg-[#007c89] font-semibold text-white">Next<ChevronRight size={16} strokeWidth={3} /></button>
    </footer>
  );
}

export default function App() {
  return (
    <div className="flex h-screen flex-col overflow-hidden">
      <TopBar />
      <div className="flex min-h-0 flex-1">
        <Dock />
        <div className="flex min-w-0 flex-1 flex-col">
          <div className={`${UI} text-[15px]`}>
            <TabStrip />
            <AddressBar />
            <Bookmarks />
          </div>
          <AppHeader />
          <main className="flex min-h-0 flex-1">
            <Preview />
            <EditorPanel />
          </main>
          <FooterBar />
        </div>
      </div>
    </div>
  );
}
